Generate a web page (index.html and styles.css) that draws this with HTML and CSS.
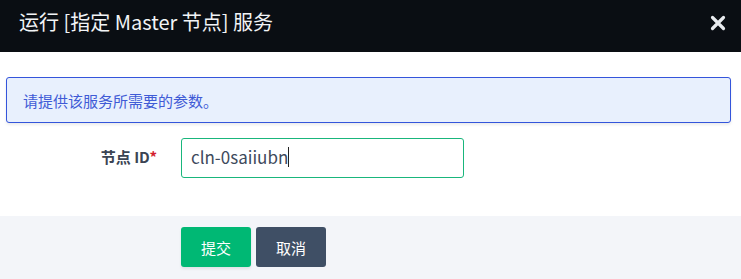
FILE: index.html
```html
<!DOCTYPE html>
<html lang="zh">
<head>
<meta charset="utf-8">
<link rel="stylesheet" href="styles.css">
</head>
<body>
<div class="dialog">
  <div class="header">
    <div class="title">运行 [指定 Master 节点] 服务</div>
    <svg class="close" width="16" height="16" viewBox="0 0 16 16"><path d="M2.5 2.5 L13.5 13.5 M13.5 2.5 L2.5 13.5" stroke="#e8ebef" stroke-width="3.2" stroke-linecap="round"/></svg>
  </div>
  <div class="body">
    <div class="alert">请提供该服务所需要的参数。</div>
    <div class="row">
      <label class="label">节点 ID<span class="req">*</span></label>
      <div class="input"><span class="val">cln-0saiiubn</span><span class="caret"></span></div>
    </div>
  </div>
  <div class="footer">
    <button class="btn primary">提交</button>
    <button class="btn secondary">取消</button>
  </div>
</div>
</body>
</html>
```
FILE: styles.css
```css
html, body { margin: 0; padding: 0; }
body {
  width: 741px; height: 279px; overflow: hidden; background: #fff;
  font-family: "Noto Sans CJK SC", "Noto Sans", sans-serif;
}
.dialog { display: flex; flex-direction: column; height: 279px; }
.header {
  height: 52px; background: #0a0e13; display: flex; align-items: center;
  justify-content: space-between; padding: 0 15px 0 19px; box-sizing: border-box;
}
.title { color: #f2f4f6; font-size: 20px; line-height: 26px; margin-top: -8px; }
.close { margin-top: -7px; }
.body { padding: 25px 10px 0 6px; height: 164px; box-sizing: border-box; }
.alert {
  height: 46px; box-sizing: border-box; border: 1px solid #3455db; border-radius: 3px;
  background: #e8f0fd; color: #3f5bd6; font-size: 15px; padding-left: 16px;
  display: flex; align-items: center; box-shadow: 0 2px 3px rgba(0,0,0,0.08);
}
.row { display: flex; align-items: center; margin-top: 15px; }
.label {
  width: 151px; text-align: right; font-weight: bold; color: #3b4453; font-size: 15px;
  margin-top: -3px;
}
.req { color: #d41f2e; }
.input {
  margin-left: 24px; width: 283px; height: 40px; box-sizing: border-box;
  border: 1px solid #19b67c; border-radius: 3px; display: flex; align-items: center;
  padding-left: 9px; color: #3e4a5c; font-size: 17px;
}
.val { margin-top: -4px; }
.caret { width: 1px; height: 20px; background: #222; margin-top: -2px; }
.footer {
  flex: 1; background: #f3f5f9; display: flex; align-items: center;
  padding-left: 181px; gap: 5px; padding-bottom: 1px;
}
.btn {
  width: 70px; height: 40px; border: none; border-radius: 3px; color: #fff;
  font-family: inherit; font-size: 15px; padding: 0;
}
.primary { background: #00b874; box-shadow: 0 2px 3px rgba(0,0,0,0.08); }
.secondary { background: #3f4f65; }
```
